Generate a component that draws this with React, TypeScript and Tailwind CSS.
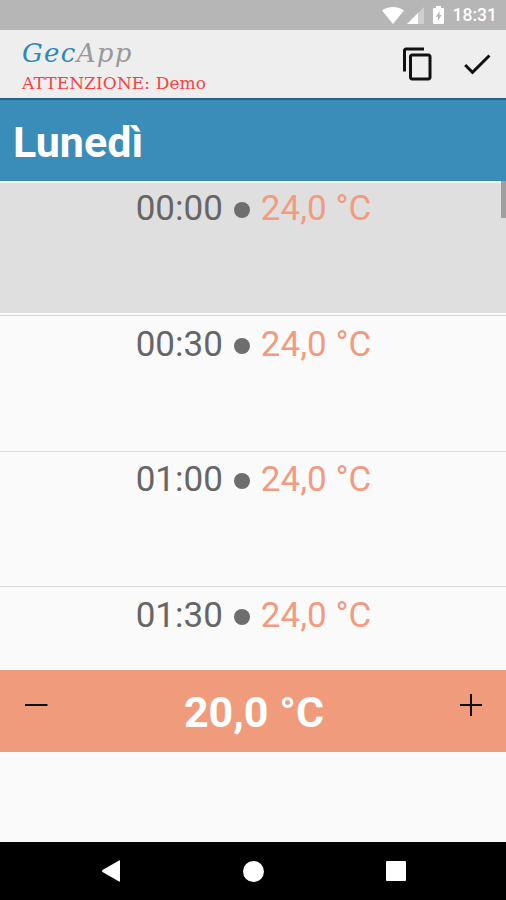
interface Slot {
  time: string;
  temp: string;
  selected?: boolean;
}

const slots: Slot[] = [
  { time: '00:00', temp: '24,0 °C', selected: true },
  { time: '00:30', temp: '24,0 °C' },
  { time: '01:00', temp: '24,0 °C' },
  { time: '01:30', temp: '24,0 °C' },
];

function StatusBar() {
  return (
    <div className="flex h-[30px] shrink-0 items-center justify-end bg-[#b6b6b6] pr-[9px] text-white">
      <svg className="h-[17px] w-[22px]" viewBox="0 0 22 17" fill="currentColor">
        <path d="M11 17 0 3.600C3 1.200 6.800 0 11 0s8 1.200 11 3.600z" />
      </svg>
      <svg className="ml-[3px] h-[17px] w-[17px]" viewBox="0 0 17 17" fill="currentColor">
        <path d="M17 0v17H0z" opacity=".35" />
        <path d="M11 6v11H0z" />
      </svg>
      <svg className="ml-[9px] h-[18px] w-[11px]" viewBox="0 0 11 18" fill="currentColor">
        <path d="M3 0h5v2h2q1 0 1 1v14q0 1-1 1H1q-1 0-1-1V3q0-1 1-1h2z" />
        <path d="M6.500 5 2.800 10.800H5V15l3.400-6H6.500z" fill="#b6b6b6" />
      </svg>
      <span className="ml-[9px] mt-[2px] text-[17.5px] leading-none font-medium">18:31</span>
    </div>
  );
}

function Header() {
  return (
    <header className="flex h-[68px] shrink-0 items-start justify-between bg-[#eeeeee] pl-[22px] pr-[11px]">
      <div className="flex flex-col">
        <div className="mt-[8px] font-['DejaVu_Serif','Liberation_Serif',serif] text-[26px] leading-[30px] tracking-[1.3px] italic">
          <span className="text-[#2f88b4]">Gec</span>
          <span className="text-[#999999]">App</span>
        </div>
        <div className="mt-[5px] font-['DejaVu_Serif','Liberation_Serif',serif] text-[17px] leading-[20px] tracking-[0.1px] text-[#ff4040]">
          ATTENZIONE: Demo
        </div>
      </div>
      <div className="flex items-center text-[#111111]">
        <button className="mt-[16px]">
          <svg className="h-[36px] w-[36px]" viewBox="0 0 24 24" fill="currentColor">
            <path d="M16 1H4c-1.100 0-2 .9-2 2v14h2V3h12V1zm3 4H8c-1.100 0-2 .9-2 2v14c0 1.100.9 2 2 2h11c1.100 0 2-.9 2-2V7c0-1.100-.9-2-2-2zm0 16H8V7h11v14z" />
          </svg>
        </button>
        <button className="mt-[16px] ml-[23px]">
          <svg className="h-[36px] w-[36px]" viewBox="0 0 24 24" fill="currentColor">
            <path d="M9 16.170 4.830 12l-1.420 1.410L9 19 21 7l-1.410-1.410z" />
          </svg>
        </button>
      </div>
    </header>
  );
}

function SlotRow({ slot }: { slot: Slot }) {
  return (
    <div className="h-[135.5px] shrink-0 border-b border-[#d8d8d8] pb-[2px]">
      <div className={`flex h-full justify-center border-t-2 border-[#fafafa] pt-[5.5px] pl-px text-[35px] leading-[41px] ${slot.selected ? 'bg-[#dfdfdf]' : ''}`}>
        <span className="text-[#666666]">{slot.time}</span>
        <span className="mx-[11px] mt-[14px] size-[16px] rounded-full bg-[#6e6e6e]" />
        <span className="text-[#f39b80]">{slot.temp}</span>
      </div>
    </div>
  );
}

function TemperatureBar() {
  return (
    <div className="flex h-[82px] shrink-0 items-start justify-between bg-[#f09b7c] pl-[24px] pr-[23px]">
      <button className="mt-[23px]">
        <svg className="size-[24px]" viewBox="0 0 24 24" stroke="#111111" strokeWidth="2">
          <path d="M1 12h22.500" />
        </svg>
      </button>
      <span className="mt-[17px] pl-px text-[43px] leading-[50px] font-bold text-white">20,0 °C</span>
      <button className="mt-[23px]">
        <svg className="size-[24px]" viewBox="0 0 24 24" stroke="#111111" strokeWidth="2">
          <path d="M1 12h22M12 1v22" />
        </svg>
      </button>
    </div>
  );
}

function NavBar() {
  return (
    <nav className="flex h-[58px] shrink-0 items-center justify-between bg-black pl-[102px] pr-[100px] text-white">
      <svg className="h-[22px] w-[18px]" viewBox="0 0 18 22" fill="currentColor">
        <path d="M17 .5q1-.5 1 .5v20q0 1-1 .5L.5 12q-.8-1 0-2z" />
      </svg>
      <span className="size-[21px] rounded-full bg-white" />
      <span className="size-[20px] rounded-[1px] bg-white" />
    </nav>
  );
}

export default function App() {
  return (
    <div className="flex h-[900px] w-[506px] flex-col overflow-hidden bg-[#fafafa] font-[Roboto,sans-serif]">
      <StatusBar />
      <Header />
      <div className="h-[82.5px] shrink-0 border-t-2 border-[#1f638a] bg-[#3b8db9] pl-[13px] pt-[17px] text-[43px] leading-[50px] font-bold text-white">
        Lunedì
      </div>
      <div className="relative flex h-[489px] shrink-0 flex-col overflow-hidden">
        {slots.map((slot) => (
          <SlotRow key={slot.time} slot={slot} />
        ))}
        {/* scrollbar thumb */}
        <div className="absolute top-0 right-0 h-[37px] w-[5px] bg-[#9f9f9f]" />
      </div>
      <TemperatureBar />
      <div className="flex-1" />
      <NavBar />
    </div>
  );
}
